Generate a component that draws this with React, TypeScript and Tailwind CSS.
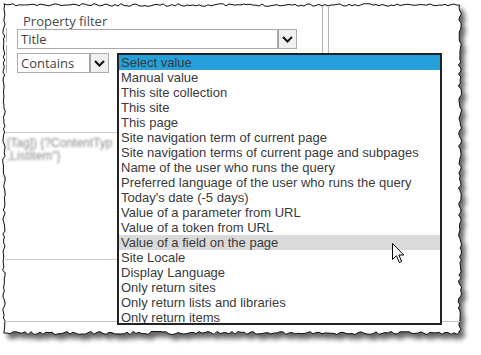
import React from 'react';

const OPTIONS = [
  'Select value',
  'Manual value',
  'This site collection',
  'This site',
  'This page',
  'Site navigation term of current page',
  'Site navigation terms of current page and subpages',
  'Name of the user who runs the query',
  'Preferred language of the user who runs the query',
  "Today's date (-5 days)",
  'Value of a parameter from URL',
  'Value of a token from URL',
  'Value of a field on the page',
  'Site Locale',
  'Display Language',
  'Only return sites',
  'Only return lists and libraries',
  'Only return items',
];

// deterministic jitter so the torn edge is the same on every render
function rng(seed: number) {
  let s = seed;
  return () => {
    s = (s * 16807) % 2147483647;
    return s / 2147483647;
  };
}

function tornPoints() {
  const r = rng(11);
  const j = (a: number) => (r() - 0.5) * a;
  const L = 4, T = 5, R = 460, B = 333;
  const pts: string[] = [];
  for (let x = L; x < R; x += 3) pts.push(`${x},${(T + j(2.6)).toFixed(1)}`);
  for (let y = T; y < B; y += 3) pts.push(`${(R + j(3.2)).toFixed(1)},${y}`);
  for (let x = R; x > L; x -= 3) pts.push(`${x},${(B + j(3.2)).toFixed(1)}`);
  for (let y = B; y > T; y -= 3) pts.push(`${(L + j(2.6)).toFixed(1)},${y}`);
  return pts.join(' ');
}

const FRAME = tornPoints();

function TornFrame() {
  return (
    <svg className="absolute inset-0" width={481} height={355} viewBox="0 0 481 355">
      <defs>
        <filter id="tear-shadow" x="-5%" y="-5%" width="115%" height="115%">
          <feDropShadow dx="4" dy="5" stdDeviation="2.5" floodColor="#000" floodOpacity="0.6" />
        </filter>
      </defs>
      <polygon points={FRAME} fill="#fff" stroke="#111" strokeWidth={1} filter="url(#tear-shadow)" />
    </svg>
  );
}

function Chevron() {
  return (
    <svg width="11" height="7" viewBox="0 0 11 7">
      <polyline points="1,1 5.5,5.5 10,1" fill="none" stroke="#111" strokeWidth={2} />
    </svg>
  );
}

function SelectBox({ value, width }: { value: string; width: string }) {
  return (
    <div className={`${width} h-[20px] flex border border-[#ababab] bg-white`}>
      <span className="flex-1 pl-[3px] text-[13px] leading-[18px] text-[#444] font-['Open_Sans',sans-serif]">{value}</span>
      <span className="w-[19px] h-[18px] flex items-center justify-center bg-[#f0f0f0] border-l-2 border-[#a6a6a6]">
        <Chevron />
      </span>
    </div>
  );
}

function Cursor() {
  return (
    <svg width="13" height="21" viewBox="0 0 13 21">
      <path d="M0.5 0.5 L0.5 16.5 L4.5 12.8 L7.3 19.5 L9.6 18.5 L6.9 12 L11.8 12 Z" fill="#fff" stroke="#000" strokeWidth={1} strokeLinejoin="miter" />
    </svg>
  );
}

export default function App() {
  return (
    <div className="relative w-[481px] h-[355px] bg-white overflow-hidden">
      <TornFrame />

      <div className="relative ml-[5px] mt-[6px] w-[455px] h-[326px]">
        {/* top: label, title field, panel dividers */}
        <div className="flex h-[67px]">
          <div className="w-[12px] flex flex-col">
            <div className="ml-[1px] mt-[22px] w-[1px] h-[14px] bg-[#b0b0b0]" />
            <div className="ml-[1px] mt-[3px] w-[1px] h-[28px] bg-[#b0b0b0]" />
          </div>
          <div className="flex flex-col">
            <div className="flex h-[47px]">
              <div className="w-[280px] pt-[7px]">
                <div className="pl-[6px] h-[16px] text-[13px] leading-[16px] text-[#4a4a4a] font-['Open_Sans',sans-serif]">
                  Property filter
                </div>
                <SelectBox value="Title" width="w-[280px]" />
              </div>
              <div className="ml-[25px] w-[1px] bg-[#b4b4b4]" />
              <div className="ml-[5px] w-[1px] bg-[#b4b4b4]" />
            </div>
            <SelectBox value="Contains" width="w-[92px]" />
          </div>
        </div>

        {/* lower part of the panel behind the popup */}
        <div className="mt-[59px] w-[112px] border-t border-[#c6c6c6]" />
        <div className="pl-[2px] pt-[4px] h-[30px] blur-[1.2px] text-[12px] leading-[13px] text-[#8a8a8a] font-['Liberation_Sans',Arial,sans-serif] whitespace-nowrap">
          <div>[Tag]) {'{'}?ContentTyp</div>
          <div>,ListItem"{'}'}</div>
        </div>
        <div className="mt-[96px] w-[112px] border-t border-[#c6c6c6]" />
        <div className="mt-[61px] w-[455px] border-t border-[#c6c6c6]" />

        {/* open drop-down list */}
        <div className="absolute left-[112px] top-[47px] w-[325px] h-[272px] border-2 border-[#222] bg-white overflow-hidden">
          {OPTIONS.map((o, i) => (
            <div
              key={o}
              className={`h-[15px] pl-[2px] text-[13px] leading-[15px] whitespace-nowrap text-[#3a3a3a] font-['Liberation_Sans',Arial,sans-serif] ${
                i === 0 ? 'bg-[#26a0da]' : i === 12 ? 'bg-[#dadada]' : ''
              }`}
            >
              {o}
            </div>
          ))}
        </div>

        <div className="absolute left-[387px] top-[237px]">
          <Cursor />
        </div>
      </div>
    </div>
  );
}
